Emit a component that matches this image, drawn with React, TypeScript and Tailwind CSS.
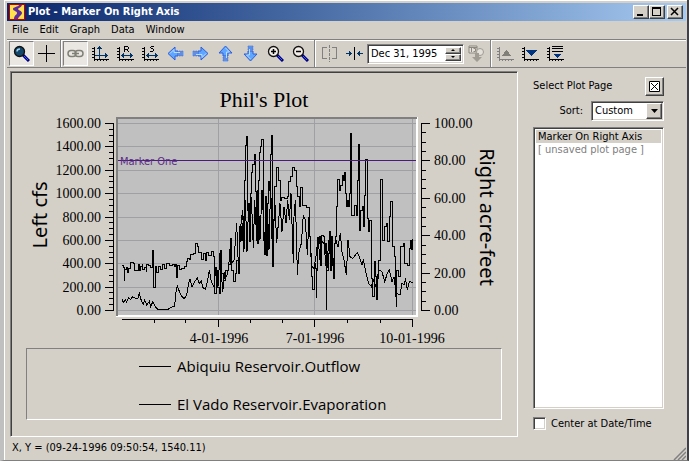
import React, { useState } from "react";

type Point = [number, number];

const FLOW_POINTS: Point[] = [
  [36, 467], [40, 472], [42, 510], [44, 478], [48, 472], [52, 486], [56, 476], [60, 458], [70, 460], [74, 482],
  [78, 480], [84, 464], [88, 482], [92, 468], [96, 464], [98, 478], [104, 472], [108, 484], [110, 462], [114, 466],
  [120, 472], [128, 422], [131, 532], [136, 470], [140, 486], [146, 468], [152, 478], [158, 462], [164, 474],
  [170, 460], [178, 466], [186, 462], [192, 470], [196, 462], [198, 502], [202, 465], [208, 478], [214, 474],
  [222, 468], [228, 455], [232, 444], [238, 448], [242, 434], [250, 430], [256, 400], [262, 408], [264, 428],
  [270, 426], [274, 448], [280, 430], [286, 450], [290, 428], [296, 436], [304, 424], [310, 438], [314, 550],
  [318, 480], [322, 532], [328, 550], [332, 422], [334, 490], [340, 510], [346, 482], [354, 462], [360, 385],
  [364, 480], [370, 514], [376, 490], [380, 450], [385, 490], [388, 350], [394, 390], [397, 340], [399, 425],
  [401, 320], [404, 210], [407, 105], [410, 78], [412, 105], [413, 300], [416, 280], [418, 395], [421, 250],
  [424, 187], [428, 163], [434, 133], [436, 245], [438, 390], [441, 260], [443, 400], [445, 210], [447, 127],
  [451, 110], [455, 88], [460, 112], [461, 390], [463, 420], [466, 260], [468, 437], [472, 280], [474, 215],
  [478, 240], [482, 133], [484, 76], [486, 195], [488, 470], [490, 330], [494, 230], [500, 172], [504, 185],
  [506, 210], [511, 270], [515, 262], [524, 265], [533, 260], [535, 215], [541, 200], [547, 172], [552, 182],
  [558, 230], [563, 260], [568, 288], [571, 232], [577, 285], [589, 292], [598, 292], [599, 380], [602, 440],
  [604, 500], [606, 538], [612, 530], [613, 460], [617, 475], [618, 562], [620, 480], [622, 400], [628, 380],
  [631, 465], [634, 375], [640, 378], [642, 430], [645, 400], [648, 597], [650, 480], [654, 430], [657, 365],
  [660, 480], [664, 378], [668, 445], [671, 505], [672, 400], [676, 380], [679, 290], [683, 208], [687, 240],
  [690, 225], [696, 195], [700, 212], [702, 187], [705, 250], [708, 290], [712, 270], [715, 290], [718, 250],
  [720, 175], [722, 70], [724, 315], [734, 285], [740, 315], [742, 210], [746, 102], [748, 360], [752, 300],
  [757, 290], [760, 350], [764, 255], [767, 148], [771, 325], [774, 365], [778, 330], [783, 360], [784, 505],
  [788, 560], [792, 455], [796, 500], [798, 568], [802, 505], [806, 450], [810, 350], [812, 208], [816, 390],
  [822, 350], [828, 340], [832, 395], [838, 320], [842, 275], [846, 330], [848, 410], [854, 440], [856, 560],
  [858, 590], [860, 480], [866, 500], [872, 410], [880, 400], [884, 460], [892, 465], [897, 415], [902, 390],
  [905, 418], [908, 388],
];

const EVAPORATION_POINTS: Point[] = [
  [36, 568], [40, 578], [46, 568], [50, 576], [56, 564], [62, 568], [68, 560], [76, 564], [84, 564], [88, 550],
  [94, 572], [100, 582], [104, 570], [110, 585], [118, 574], [122, 590], [128, 576], [136, 590], [144, 598],
  [174, 598], [184, 592], [194, 588], [198, 546], [202, 528], [208, 544], [214, 558], [222, 566], [230, 556],
  [236, 520], [240, 508], [246, 532], [252, 518], [258, 510], [262, 504], [268, 520], [274, 512], [278, 532],
  [286, 538], [292, 516], [298, 480], [304, 514], [312, 530], [318, 470], [324, 530], [330, 430], [338, 545],
  [344, 490], [350, 500], [356, 470], [362, 390], [366, 460], [372, 450], [380, 340], [386, 490], [392, 350],
  [398, 300], [402, 420], [406, 270], [411, 425], [416, 280], [420, 360], [424, 260], [430, 415], [434, 270],
  [440, 380], [444, 240], [450, 390], [456, 240], [460, 320], [465, 436], [472, 290], [477, 420], [482, 220],
  [488, 470], [494, 260], [500, 400], [506, 330], [510, 280], [516, 365], [522, 290], [528, 340], [533, 270],
  [538, 330], [543, 250], [550, 460], [552, 320], [556, 270], [560, 400], [562, 495], [566, 430], [574, 400],
  [580, 315], [586, 330], [592, 435], [597, 320], [601, 400], [606, 470], [612, 475], [618, 440], [624, 380],
  [630, 450], [636, 395], [642, 400], [650, 490], [656, 390], [664, 410], [670, 480], [676, 385], [684, 410],
  [691, 370], [696, 425], [702, 450], [709, 495], [714, 390], [720, 440], [728, 445], [742, 428], [748, 440],
  [756, 465], [760, 448], [768, 490], [776, 520], [784, 530], [790, 510], [798, 530], [806, 480], [816, 485],
  [824, 515], [832, 490], [838, 480], [846, 515], [852, 500], [858, 550], [870, 555], [876, 520], [884, 525],
  [886, 505], [892, 540], [898, 515], [908, 517],
];

function stepPath(points: Point[]) {
  return points.map(([x, y], i) => (i === 0 ? `M${x} ${y}` : `H${x}V${y}`)).join("");
}

function linePath(points: Point[]) {
  return points.map(([x, y], i) => `${i === 0 ? "M" : "L"}${x} ${y}`).join("");
}

const leftLabels = ["1600.00", "1400.00", "1200.00", "1000.00", "800.00", "600.00", "400.00", "200.00", "0.00"];
const rightLabels = ["100.00", "80.00", "60.00", "40.00", "20.00", "0.00"];
const dateTicks = [122, 154, 185, 218, 250, 282, 314, 347, 380, 412];
const dateLabels: [number, string][] = [[219, "4-01-1996"], [315, "7-01-1996"], [412, "10-01-1996"]];
const yAt = (fraction: number) => Math.round(123 + 187 * fraction);

function PlotChart() {
  return (
    <svg viewBox="12 73 504 275" className="block w-full" role="img" aria-label="Phil's Plot">
      <text x="264" y="107" textAnchor="middle" fontSize="22" className="font-['Liberation_Serif',serif]">Phil's Plot</text>
      <g shapeRendering="crispEdges">
        <rect x="118" y="119" width="298" height="197" fill="#c0c0c0" />
        {leftLabels.map((label, i) => (
          <rect key={label} x="118" y={yAt(i / 8)} width="298" height="1" fill="#a0a0a4" />
        ))}
        {[218, 314, 412].map((x) => (
          <rect key={x} x={x} y="119" width="1" height="197" fill="#a0a0a4" />
        ))}
        <path d="M116 315h300v-198h2v200h-302z" fill="#fff" />
        <rect x="116" y="117" width="301" height="2" fill="#808080" />
        <rect x="116" y="117" width="2" height="199" fill="#808080" />
        <rect x="113" y="123" width="1" height="188" />
        {Array.from({ length: 33 }, (_, i) => (
          <rect key={i} x={i % 4 === 0 ? 105 : 109} y={yAt(i / 32)} width={i % 4 === 0 ? 8 : 4} height="1" />
        ))}
        <rect x="421" y="123" width="1" height="188" />
        {Array.from({ length: 21 }, (_, i) => (
          <rect key={i} x="422" y={yAt(i / 20)} width={i % 4 === 0 ? 8 : 4} height="1" />
        ))}
        <rect x="122" y="319" width="291" height="1" />
        {dateTicks.slice(1).map((x, i) => (
          <rect key={x} x={x} y="319" width="1" height={i % 3 === 2 ? 8 : 4} />
        ))}
      </g>
      <svg x="110" y="110" width="310" height="210" viewBox="0 0 930 630" fill="none" stroke="#000" shapeRendering="crispEdges">
        <path d={stepPath(FLOW_POINTS)} strokeWidth="3" />
        <path d={linePath(EVAPORATION_POINTS)} strokeWidth="3" />
      </svg>
      <rect x="118" y="160" width="298" height="1" fill="#4b1a7a" />
      <text x="120" y="165" fontSize="11" fill="#5b2d86" className="font-['DejaVu_Sans_Condensed','DejaVu_Sans',sans-serif]">Marker One</text>
      <g fontSize="14" className="font-['Liberation_Serif',serif]">
        {leftLabels.map((label, i) => (
          <text key={label} x="101" y={yAt(i / 8) + 5} textAnchor="end">{label}</text>
        ))}
        {rightLabels.map((label, i) => (
          <text key={label} x="434" y={yAt(i / 5) + 5}>{label}</text>
        ))}
        {dateLabels.map(([x, label]) => (
          <text key={label} x={x} y="343" textAnchor="middle">{label}</text>
        ))}
      </g>
      <g fontSize="20" textAnchor="middle" className="font-['Noto_Sans',sans-serif]">
        <text transform="translate(47 215) rotate(-90)">Left cfs</text>
        <text transform="translate(480 217) rotate(90)">Right acre-feet</text>
      </g>
    </svg>
  );
}

function Icon({ children }: { children: React.ReactNode }) {
  return (
    <svg viewBox="0 0 17 17" className="size-[17px]" fill="none" stroke="#000" shapeRendering="crispEdges" aria-hidden="true">
      {children}
    </svg>
  );
}

function Axes({ color = "#000" }: { color?: string }) {
  return (
    <>
      <path d="M2.5 2v12.500H17" stroke={color} />
      <path d="M0 3.500h2M0 6.500h2M0 9.500h2M0 12.500h2M5.500 15v1M8.500 15v1M11.500 15v1M14.500 15v1M2.500 15v1" stroke={color} />
    </>
  );
}

function ScaleIcon({ mark }: { mark: "R" | "S" }) {
  return (
    <Icon>
      <Axes />
      <path d="M4 10.500h12M6.500 8v5M13.500 8v5M5.500 9v3M14.500 9v3" stroke="#003366" />
      {mark === "R" ? (
        <path d="M7.500 7V1.500h3.500M11.500 2v2M8 4.500h3M10.500 5v1M11.500 6v1" />
      ) : (
        <path d="M12 1.500H9M8.500 2v1M9 3.500h2M11.500 4v2M8 6.500h3" />
      )}
    </Icon>
  );
}

function ArrowIcon({ turn }: { turn: number }) {
  return (
    <svg viewBox="0 0 17 17" className="size-[17px]" aria-hidden="true">
      <g transform={`rotate(${turn} 8.5 8.5)`}>
        <path d="M1 8.500L8 2v4h3v5H8v4z" fill="#5ea6ff" stroke="#2f5fd8" />
        <path d="M12 6h1.500v5H12zM14.500 6H16v5h-1.500z" fill="#5ea6ff" stroke="#2f5fd8" strokeWidth=".5" />
        <path d="M3 8.500L7 4.500v3h6" stroke="#b9dcff" fill="none" />
      </g>
    </svg>
  );
}

function LensIcon({ sign, fill = "#f4eee8" }: { sign?: "plus" | "minus"; fill?: string }) {
  return (
    <svg viewBox="0 0 17 17" className="size-[17px]" fill="none" aria-hidden="true">
      <path d="M10 10l6 6" stroke="#00007b" strokeWidth="3" />
      <path d="M11 11l4 4" stroke="#3c5cff" />
      <circle cx="6.5" cy="6.5" r="5" fill={fill} stroke="#111" strokeWidth="1.300" />
      {sign && <path d="M4 6.500h5" stroke="#000" strokeWidth="1.500" />}
      {sign === "plus" && <path d="M6.500 4v5" stroke="#000" strokeWidth="1.500" />}
      {!sign && <path d="M4 6.500q0-2.500 3-2.500" stroke="#9fd0ec" strokeWidth="1.500" />}
    </svg>
  );
}

function ToolButton({ label, pressed, children }: { label: string; pressed?: boolean; children: React.ReactNode }) {
  return (
    <button
      type="button"
      aria-label={label}
      aria-pressed={pressed}
      className={
        pressed
          ? "flex h-[25px] w-[25px] shrink-0 items-center justify-center border border-t-[#808080] border-l-[#808080] border-r-white border-b-white bg-[#eae7e3]"
          : "flex h-[25px] w-[25px] shrink-0 items-center justify-center"
      }
    >
      {children}
    </button>
  );
}

function Separator() {
  return <div className="mx-px w-[2px] self-stretch border-l border-l-[#808080] border-r border-r-white" />;
}

const raised =
  "flex items-center justify-center bg-[#d4d0c8] border border-t-white border-l-white border-r-[#404040] border-b-[#404040] shadow-[inset_-1px_-1px_#808080]";
const sunken =
  "border border-t-[#808080] border-l-[#808080] border-r-white border-b-white shadow-[inset_1px_1px_#404040,inset_-1px_-1px_#d4d0c8]";

function TitleBar() {
  return (
    <header className="flex h-[18px] items-center gap-[2px] bg-linear-to-r from-[#0a246a] to-[#a6caf0] pr-[3px] pl-[2px]">
      <svg viewBox="0 0 16 16" className="size-4" aria-hidden="true">
        <rect x=".5" y=".5" width="15" height="15" fill="#ffe04d" stroke="#c00000" />
        <path d="M10 1h3c-1 3-4 3-4 4s4 2 4 4-4 4-4 6H5c0-4 3-4 3-6S4 7 4 5s5-2 6-4z" fill="#5a2ca0" />
      </svg>
      <h1 className="flex-1 truncate pl-px text-[11px] leading-4 font-bold text-white">
        Plot - Marker On Right Axis
      </h1>
      <div className="flex">
        <button type="button" aria-label="Minimize" className={`${raised} h-[14px] w-4`}>
          <svg viewBox="0 0 10 10" className="size-[10px]"><path d="M1 7h6v2H1z" /></svg>
        </button>
        <button type="button" aria-label="Maximize" className={`${raised} h-[14px] w-4`}>
          <svg viewBox="0 0 10 10" className="size-[10px]" shapeRendering="crispEdges"><path d="M0 0h9v9H0zM1 2v6h7V2z" fillRule="evenodd" /></svg>
        </button>
        <button type="button" aria-label="Close" className={`${raised} ml-[2px] h-[14px] w-4`}>
          <svg viewBox="0 0 10 10" className="size-[10px]"><path d="M1 1l7 7M8 1l-7 7" stroke="#000" strokeWidth="1.500" /></svg>
        </button>
      </div>
    </header>
  );
}

function Toolbar() {
  return (
    <div role="toolbar" aria-label="Plot tools" className="flex h-[29px] items-center border-t border-b border-[#808080] pl-[2px] shadow-[inset_0_1px_white]">
      <ToolButton label="Zoom" pressed><LensIcon fill="#12476b" /></ToolButton>
      <ToolButton label="Crosshair"><Icon><path d="M8.500 0v17M0 8.500h17" /></Icon></ToolButton>
      <Separator />
      <ToolButton label="Link axes" pressed>
        <svg viewBox="0 0 17 17" className="size-[17px]" fill="none" stroke="#808078" strokeWidth="1.500" aria-hidden="true">
          <rect x="1" y="5.500" width="8" height="6" rx="3" />
          <rect x="8" y="5.500" width="8" height="6" rx="3" />
          <path d="M5 8.500h7" />
        </svg>
      </ToolButton>
      <ToolButton label="Autoscale">
        <Icon>
          <Axes />
          <path d="M7.500 1v13M5 3.500h5M6 2.500h3M3 10.500h13M13.500 8v5M14.500 9v3" stroke="#003366" />
        </Icon>
      </ToolButton>
      <ToolButton label="Rescale right"><ScaleIcon mark="R" /></ToolButton>
      <ToolButton label="Rescale span"><ScaleIcon mark="S" /></ToolButton>
      <ToolButton label="Pan left"><ArrowIcon turn={0} /></ToolButton>
      <ToolButton label="Pan right"><ArrowIcon turn={180} /></ToolButton>
      <ToolButton label="Pan up"><ArrowIcon turn={90} /></ToolButton>
      <ToolButton label="Pan down"><ArrowIcon turn={270} /></ToolButton>
      <ToolButton label="Zoom in"><LensIcon sign="plus" /></ToolButton>
      <ToolButton label="Zoom out"><LensIcon sign="minus" /></ToolButton>
      <Separator />
      <ToolButton label="Split">
        <Icon>
          <path d="M6 2.500H1.500v11H6M11 2.500h4.500v11H11" stroke="#808080" />
          <path d="M8.500 0v17" stroke="#808080" strokeDasharray="3 1" />
        </Icon>
      </ToolButton>
      <ToolButton label="Center on date">
        <Icon>
          <path d="M8.500 2v13" />
          <path d="M0 8.500h6M4.500 7v3M3.500 6v5M11 8.500h6M12.500 7v3M13.500 6v5" stroke="#003366" />
        </Icon>
      </ToolButton>
      <div className={`${sunken} flex h-5 w-[97px] items-center bg-white p-[2px]`}>
        <input aria-label="Date" defaultValue="Dec 31, 1995" className="h-full min-w-0 flex-1 pl-px leading-4 outline-none" />
        <div className="flex h-full w-4 flex-col">
          <button type="button" aria-label="Later" className={`${raised} flex-1`}>
            <svg viewBox="0 0 4 2" className="h-[2px] w-1"><path d="M0 2l2-2 2 2z" /></svg>
          </button>
          <button type="button" aria-label="Earlier" className={`${raised} flex-1`}>
            <svg viewBox="0 0 4 2" className="h-[2px] w-1"><path d="M0 0l2 2 2-2z" /></svg>
          </button>
        </div>
      </div>
      <ToolButton label="Go to date">
        <svg viewBox="0 0 17 17" className="size-[17px]" aria-hidden="true">
          <path d="M1 1h8v7H1z" fill="#e4e1db" stroke="#8c8880" />
          <path d="M3.500 3v4M5.500 3.500h2v3h-2M1 2.500h8" stroke="#8c8880" fill="none" />
          <circle cx="12" cy="7" r="3.500" fill="#e4e1db" stroke="#a09c94" />
          <path d="M7 8h4v4h3l-5 5-5-5h3z" fill="#a09c94" />
        </svg>
      </ToolButton>
      <Separator />
      <ToolButton label="Previous plot">
        <Icon><Axes color="#808080" /><path d="M9.500 5l5 6h-10z" fill="#808078" stroke="none" /></Icon>
      </ToolButton>
      <ToolButton label="Next plot">
        <Icon><Axes /><path d="M4 5h11l-5.500 6z" fill="#003380" stroke="none" /></Icon>
      </ToolButton>
      <ToolButton label="Plot list">
        <Icon>
          <Axes />
          <path d="M5 1.500h11M5 3.500h11M5 6.500h11" />
          <path d="M6 9h8l-4 4z" fill="#003380" stroke="none" />
        </Icon>
      </ToolButton>
    </div>
  );
}

const legend = ["Abiquiu Reservoir.Outflow", "El Vado Reservoir.Evaporation"];
const pages = ["Marker On Right Axis", "[ unsaved plot page ]"];

export default function App() {
  const [page, setPage] = useState(0);
  return (
    <div className="flex min-h-screen flex-col border-r-2 border-b border-l-4 border-r-[#404048] border-b-[#808080] border-l-[#c0c0c0] bg-[#d4d0c8] font-['DejaVu_Sans_Condensed','DejaVu_Sans',sans-serif] text-[11px] text-black">
      <div className="flex flex-1 flex-col border-t border-l border-white pt-[2px] pr-px pl-[2px]">
        <TitleBar />
        <nav aria-label="Main menu" className="flex h-[18px] items-center gap-[11px] pl-[5px]">
          {["File", "Edit", "Graph", "Data", "Window"].map((item) => (
            <button key={item} type="button" className="leading-4">{item}</button>
          ))}
        </nav>
        <Toolbar />
        <div className="flex flex-1 pt-[3px] pl-[3px]">
          <main className={`${sunken} min-w-0 flex-1 p-px`}>
            <PlotChart />
            <ul className="mx-[14px] mb-[14px] flex flex-col gap-[14px] border border-t-[#808080] border-r-white border-b-white border-l-[#808080] pt-[5px] pb-[3px] pl-[112px] font-['Open_Sans',sans-serif] text-[15px] leading-6">
              {legend.map((label) => (
                <li key={label} className="flex items-center gap-[6px]">
                  <span className="h-px w-8 bg-black" />
                  {label}
                </li>
              ))}
            </ul>
          </main>
          <aside className="flex w-[168px] shrink-0 flex-col pt-[5px] pr-[22px] pl-[15px]">
            <div className="flex h-5 items-center justify-between">
              <h2>Select Plot Page</h2>
              <button type="button" aria-label="Close page list" className={`${raised} h-[19px] w-[19px]`}>
                <svg viewBox="0 0 11 11" className="size-[11px]" fill="#fff" stroke="#000"><path d="M.5.5h10v10H.5z" /><path d="M2 2l7 7M9 2L2 9" fill="none" /></svg>
              </button>
            </div>
            <div className="mt-[5px] flex items-center justify-end gap-2">
              <label htmlFor="sort">Sort:</label>
              <div className="relative w-[73px]">
                <select id="sort" className={`${sunken} block h-5 w-full appearance-none bg-white pl-[3px]`}>
                  <option>Custom</option>
                </select>
                <span className={`${raised} pointer-events-none absolute top-[2px] right-[2px] h-4 w-4`}>
                  <svg viewBox="0 0 7 4" className="h-1 w-[7px]"><path d="M0 0h7L3.500 4z" /></svg>
                </span>
              </div>
            </div>
            <ul className={`${sunken} mt-[6px] flex-1 bg-white p-[2px]`}>
              {pages.map((name, i) => (
                <li key={name}>
                  <button
                    type="button"
                    onClick={() => setPage(i)}
                    className={`block w-full pl-[2px] text-left leading-[13px] whitespace-nowrap ${page === i ? "bg-[#d4d0c8]" : ""} ${i === 1 ? "text-[#808080]" : ""}`}
                  >
                    {name}
                  </button>
                </li>
              ))}
            </ul>
            <label className="mt-2 mb-[7px] flex items-center gap-[5px] leading-[13px] whitespace-nowrap">
              <input type="checkbox" className={`${sunken} size-[13px] shrink-0 appearance-none bg-white`} />
              Center at Date/Time
            </label>
          </aside>
        </div>
        <footer className="flex h-[23px] items-center justify-between pl-[5px]">
          <span>X, Y = (09-24-1996 09:50:54, 1540.11)</span>
          <svg viewBox="0 0 13 13" className="size-[13px] self-end" stroke="#808080" strokeWidth="1.500" aria-hidden="true">
            <path d="M1 13L13 1M5 13l8-8M9 13l4-4" />
          </svg>
        </footer>
      </div>
    </div>
  );
}
